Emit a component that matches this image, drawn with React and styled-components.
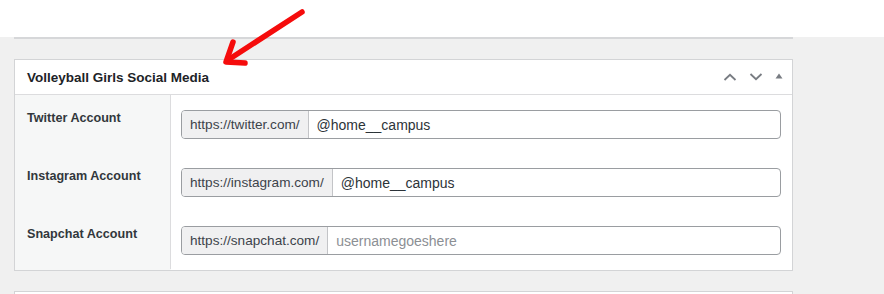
import styled, { createGlobalStyle } from 'styled-components';

const GlobalStyle = createGlobalStyle`
  html, body {
    margin: 0;
    padding: 0;
    background: #ffffff;
    font-family: 'Liberation Sans', Arial, sans-serif;
    color: #1d2327;
  }
`;

const StyledPage = styled.div`
  position: relative;
  width: 884px;
  height: 294px;
  overflow: hidden;
`;

const StyledTopBand = styled.div`
  height: 37px;
  background: #ffffff;
`;

const StyledCanvas = styled.div`
  background: #f0f0f0;
  padding: 0 91px 0 14px;
  height: 257px;
`;

const StyledDivider = styled.div`
  border-top: 2px solid #d6d7d9;
  margin-bottom: 20px;
`;

const StyledPostbox = styled.div`
  background: #ffffff;
  border: 1px solid #d3d4d6;
  margin-bottom: ${(props) => props.gap || 0}px;
  height: ${(props) => (props.stub ? '20px' : 'auto')};
`;

const StyledHeader = styled.div`
  height: 34px;
  display: flex;
  align-items: center;
  justify-content: space-between;
  padding: 0 9px 0 12px;
  border-bottom: 1px solid #dcdcde;
`;

const StyledTitle = styled.h2`
  margin: 0;
  font-size: 13.5px;
  font-weight: 700;
  color: #1d2327;
`;

const StyledControls = styled.div`
  display: flex;
  align-items: center;
  gap: 12px;
  color: #787c82;
`;

const StyledRows = styled.div`
  display: grid;
  grid-template-columns: 156px 1fr;
  grid-auto-rows: 58px;
  padding-bottom: 1px;
  background: linear-gradient(to right, #f6f7f7 156px, #ffffff 156px);
`;

const StyledLabel = styled.div`
  background: #f6f7f7;
  border-right: 1px solid #dcdcde;
  padding: 14px 12px 0;
  box-sizing: border-box;
  font-size: 12.6px;
  font-weight: 700;
  line-height: 18px;
  color: #32373c;
`;

const StyledCell = styled.div`
  padding: 15px 11px 14px 10px;
  box-sizing: border-box;
`;

const StyledField = styled.div`
  display: flex;
  height: 29px;
  box-sizing: border-box;
  border: 1px solid #9a9da1;
  border-radius: 4px;
  overflow: hidden;
  font-size: 13.6px;
`;

const StyledPrefix = styled.span`
  display: flex;
  align-items: center;
  padding: 0 8px;
  background: #f0f0f1;
  border-right: 1px solid #c3c4c7;
  color: #3c434a;
  font-size: 13.6px;
`;

const StyledValue = styled.span`
  display: flex;
  align-items: center;
  padding: 0 8px;
  font-size: 14px;
  color: ${(props) => (props.placeholder ? '#8c8f94' : '#2c3338')};
`;

const StyledArrow = styled.svg`
  position: absolute;
  left: 218px;
  top: 4px;
`;

const accounts = [
  { label: 'Twitter Account', prefix: 'https://twitter.com/', value: '@home__campus' },
  { label: 'Instagram Account', prefix: 'https://instagram.com/', value: '@home__campus' },
  { label: 'Snapchat Account', prefix: 'https://snapchat.com/', placeholder: 'usernamegoeshere' },
];

const App = () => (
  <>
    <GlobalStyle />
    <StyledPage>
      <StyledTopBand />
      <StyledCanvas>
        <StyledDivider />
        <StyledPostbox gap={20}>
          <StyledHeader>
            <StyledTitle>{'Volleyball Girls Social Media'}</StyledTitle>
            <StyledControls>
              <svg width='14' height='8' viewBox='0 0 14 8'>
                <path d='M1.5 7 L7 1.8 L12.5 7' fill='none' stroke='currentColor' strokeWidth='1.8' />
              </svg>
              <svg width='14' height='8' viewBox='0 0 14 8'>
                <path d='M1.5 1 L7 6.2 L12.5 1' fill='none' stroke='currentColor' strokeWidth='1.8' />
              </svg>
              <svg width='8' height='6' viewBox='0 0 8 6' style={{ marginTop: -3 }}>
                <path d='M0.5 5.5 L4 0.5 L7.5 5.5 Z' fill='currentColor' />
              </svg>
            </StyledControls>
          </StyledHeader>
          <StyledRows>
            {accounts.map((item) => [
              <StyledLabel key={`${item.label}-l`}>{item.label}</StyledLabel>,
              <StyledCell key={`${item.label}-c`}>
                <StyledField>
                  <StyledPrefix>{item.prefix}</StyledPrefix>
                  {item.value ? (
                    <StyledValue>{item.value}</StyledValue>
                  ) : (
                    <StyledValue placeholder>{item.placeholder}</StyledValue>
                  )}
                </StyledField>
              </StyledCell>,
            ])}
          </StyledRows>
        </StyledPostbox>
        <StyledPostbox stub />
      </StyledCanvas>
      <StyledArrow width='100' height='70' viewBox='0 0 100 70'>
        <g fill='none' stroke='#f50c0c' strokeWidth='5.5' strokeLinecap='round' strokeLinejoin='round'>
          <path d='M84 8 L10 56' />
          <path d='M15 38 L8 58 L27 59' />
        </g>
      </StyledArrow>
    </StyledPage>
  </>
);

export default App;
